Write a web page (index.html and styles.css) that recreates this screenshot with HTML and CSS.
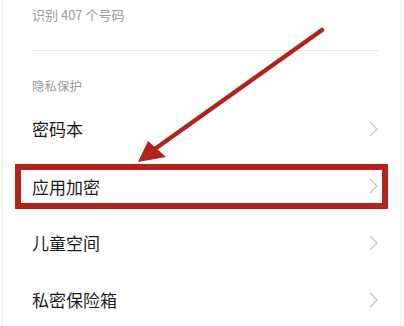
FILE: index.html
```html
<!DOCTYPE html>
<html>
<head>
    <meta charset="utf-8">
    <title>隐私保护</title>
    <link rel="stylesheet" href="styles.css">
</head>
<body>
    <div class="kart">
        <div class="alt-yazi">识别 407 个号码</div>
        <div class="baslik">隐私保护</div>

        <div class="satir">
            <span>密码本</span>
            <svg class="ok" width="9" height="16" viewBox="0 0 9 16"><polyline points="1,1 8,8 1,15"/></svg>
        </div>
        <div class="satir secili">
            <span>应用加密</span>
            <svg class="ok" width="9" height="16" viewBox="0 0 9 16"><polyline points="1,1 8,8 1,15"/></svg>
        </div>
        <div class="satir">
            <span>儿童空间</span>
            <svg class="ok" width="9" height="16" viewBox="0 0 9 16"><polyline points="1,1 8,8 1,15"/></svg>
        </div>
        <div class="satir">
            <span>私密保险箱</span>
            <svg class="ok" width="9" height="16" viewBox="0 0 9 16"><polyline points="1,1 8,8 1,15"/></svg>
        </div>
    </div>

    <!-- kırmızı işaret oku -->
    <svg class="isaret" width="404" height="326" viewBox="0 0 404 326">
        <line x1="322" y1="30" x2="152" y2="151" stroke="#b2241b" stroke-width="4.5" stroke-linecap="round"/>
        <polygon points="138,162 148,141 166,157" fill="#b2241b"/>
    </svg>
</body>
</html>
```

FILE: styles.css
```css
* {box-sizing: border-box;}
body {
    margin: 0;
    background-color: #fff;
    font-family: "Noto Sans CJK SC", "Noto Sans", sans-serif;
    position: relative;
    height: 326px;
    overflow: hidden;}

.kart {
    margin: 0 3px 0 2px;
    height: 326px;
    border-left: 1px solid #ececec;
    border-right: 1px solid #ececec;}

.alt-yazi {
    margin: 0 22px 0 29px;
    height: 51px;
    padding-top: 6px;
    line-height: 18px;
    font-size: 13px;
    color: #9a9a9a;
    border-bottom: 1px solid #e9e9e9;}

.baslik {
    margin-left: 29px;
    padding-top: 27px;
    padding-bottom: 6px;
    line-height: 16px;
    font-size: 12.5px;
    color: #999;}

.satir {
    height: 57px;
    display: flex;
    align-items: center;
    justify-content: space-between;
    padding: 0 22px 0 29px;
    font-size: 17px;
    color: #1c1c1c;}

.secili {
    margin: 7px 12px 5px 12px;
    height: 45px;
    padding: 0 4px 1px 11px;
    border: 6px solid #b2241b;}

.ok polyline {
    fill: none;
    stroke: #c6c6c6;
    stroke-width: 1.3;}

.isaret {
    position: absolute;
    top: 0;
    left: 0;
    pointer-events: none;}
```
